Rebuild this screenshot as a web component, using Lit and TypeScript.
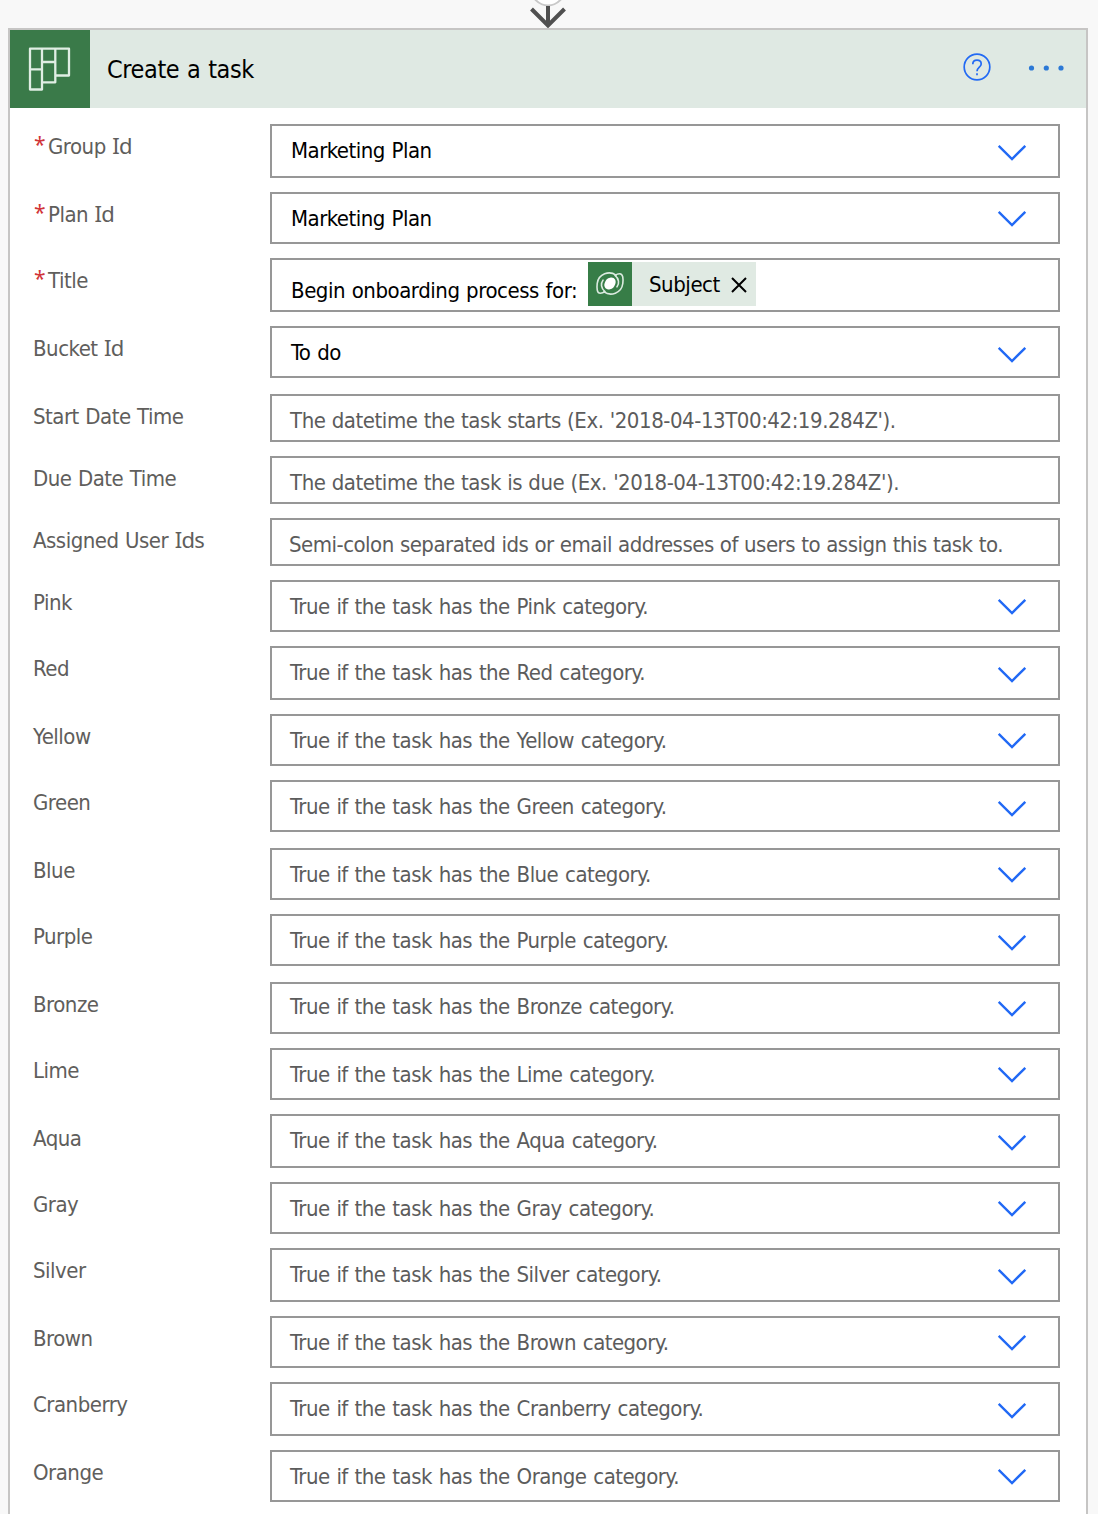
import { LitElement, html, css, svg, nothing } from "lit";
import { customElement, property } from "lit/decorators.js";
import { classMap } from "lit/directives/class-map.js";

interface Field {
  label: string;
  text: string;
  kind: "select" | "input" | "token";
  filled?: boolean;
  required?: boolean;
  /** box height */
  h: number;
  /** space above the row */
  gap?: number;
  /** chevron sits slightly lower */
  low?: boolean;
  /** text sits slightly higher */
  high?: boolean;
  /** long text, set tighter */
  tight?: boolean;
}

const category = (name: string, h: number, low: boolean, gap = 14, high = false): Field => ({
  label: name,
  text: `True if the task has the ${name} category.`,
  kind: "select",
  h,
  low,
  gap,
  high,
});

const FIELDS: Field[] = [
  { label: "Group Id", text: "Marketing Plan", kind: "select", filled: true, required: true, h: 54, gap: 16, low: true },
  { label: "Plan Id", text: "Marketing Plan", kind: "select", filled: true, required: true, h: 52 },
  { label: "Title", text: "Begin onboarding process for:", kind: "token", filled: true, required: true, h: 54 },
  { label: "Bucket Id", text: "To do", kind: "select", filled: true, h: 52, low: true },
  { label: "Start Date Time", text: "The datetime the task starts (Ex. '2018-04-13T00:42:19.284Z').", kind: "input", h: 48, gap: 16 },
  { label: "Due Date Time", text: "The datetime the task is due (Ex. '2018-04-13T00:42:19.284Z').", kind: "input", h: 48 },
  { label: "Assigned User Ids", text: "Semi-colon separated ids or email addresses of users to assign this task to.", kind: "input", h: 48, tight: true },
  category("Pink", 52, false),
  category("Red", 54, true),
  category("Yellow", 52, false),
  category("Green", 52, true),
  category("Blue", 52, false, 16),
  category("Purple", 52, true),
  category("Bronze", 52, false, 16, true),
  category("Lime", 52, false),
  category("Aqua", 54, true),
  category("Gray", 52, false),
  category("Silver", 54, true),
  category("Brown", 52, false),
  category("Cranberry", 54, true),
  category("Orange", 52, false),
];

@customElement("field-row")
export class FieldRow extends LitElement {
  @property({ attribute: false }) field!: Field;

  static styles = css`
    :host {
      display: flex;
      align-items: flex-start;
      padding: 0 26px 0 23px;
    }
    .label {
      width: 237px;
      flex: none;
      line-height: 30px;
      padding-top: 8px;
      box-sizing: border-box;
      color: #605e5c;
      white-space: nowrap;
      display: flex;
      letter-spacing: -0.5px;
    }
    .label.aqua {
      padding-top: 10px;
    }
    .star {
      color: #d13438;
      width: 15px;
      font-family: "Noto Sans", sans-serif;
      font-size: 21px;
      line-height: 24px;
      padding-left: 1px;
      box-sizing: border-box;
    }
    .seriffed {
      font-family: "Noto Sans", sans-serif;
      letter-spacing: -0.7px;
      line-height: 0;
    }
    .box {
      flex: 1;
      box-sizing: border-box;
      border: 2px solid #979797;
      background: #fff;
      display: flex;
      align-items: flex-start;
      padding-left: 18px;
      color: #5c5c5c;
    }
    .select {
      word-spacing: 1.1px;
      letter-spacing: -0.54px;
    }
    .input {
      word-spacing: 0.4px;
    }
    .tight {
      letter-spacing: -0.51px;
      padding-left: 17px;
    }
    .filled {
      color: #000;
      padding-left: 19px;
    }
    .text {
      line-height: 30px;
      padding-top: 10px;
      white-space: nowrap;
    }
    .high .text {
      padding-top: 8px;
    }
    .token .text {
      padding-top: 16px;
      width: 286px;
    }
    .chevron {
      margin: 16px 31px 0 auto;
      width: 30px;
      height: 18px;
      flex: none;
    }
    .low .chevron {
      margin-top: 18px;
    }
    .chip {
      display: flex;
      align-items: center;
      margin: 2px 0 0 11px;
      height: 44px;
      width: 168px;
      background: #e0eae3;
    }
    .chip-icon {
      width: 44px;
      height: 44px;
      background: #377d47;
      flex: none;
    }
    .chip-name {
      margin: 2px 0 0 17px;
      line-height: 30px;
      width: 72px;
    }
    .close {
      width: 16px;
      height: 16px;
      margin: 2px 0 0 10px;
    }
  `;

  private renderChip() {
    const lobe = "M28 13.200C21.500 8.500 10.500 11.500 9.200 21.500C8.700 26 8.800 31.300 12.300 31.300C14.500 31.300 15.700 30.600 17 29.700C13 26.500 12.400 21.500 15 18.200";
    return html`<span class="chip">
      <svg class="chip-icon" viewBox="0 0 44 44" fill="none" stroke="#dcebe0" stroke-width="1.6" stroke-linecap="round" stroke-linejoin="round">
        <path d=${lobe}/>
        <path d=${lobe} transform="rotate(180 22 21.500)"/>
        <path d="M22 15.800C26 14.500 28.800 18.500 27.300 22C26.300 25 24.500 27 22 27.200C18 28.500 15.200 24.500 16.700 21C17.700 18 19.500 16 22 15.800Z" fill="#fff" stroke="none"/>
      </svg>
      <span class="chip-name">Subject</span>
      <svg class="close" viewBox="0 0 16 16" fill="none" stroke="#000" stroke-width="2"><path d="M1 1L15 15M15 1L1 15"/></svg>
    </span>`;
  }

  private renderLabel(label: string) {
    const at = label.search(/\bIds?$/);
    return at < 0
      ? html`<span>${label}</span>`
      : html`<span>${label.slice(0, at)}<span class="seriffed">${label.slice(at)}</span></span>`;
  }

  render() {
    const f = this.field;
    return html`
      <div class=${classMap({ label: true, aqua: f.label === "Aqua" })}>
        ${f.required ? html`<span class="star">*</span>` : nothing}${this.renderLabel(f.label)}
      </div>
      <div
        class=${classMap({ box: true, [f.kind]: true, filled: !!f.filled, low: !!f.low, high: !!f.high, tight: !!f.tight })}
        style="height:${f.h}px"
      >
        <span class="text">${f.text}</span>
        ${f.kind === "token" ? this.renderChip() : nothing}
        ${f.kind === "select"
          ? html`<svg class="chevron" viewBox="0 0 30 18" fill="none" stroke="#2169f5" stroke-width="2.400"><path d="M1.700 1.800L15 15L28.300 1.800"/></svg>`
          : nothing}
      </div>
    `;
  }
}

@customElement("app-root")
export class AppRoot extends LitElement {
  static styles = css`
    :host {
      display: block;
      height: 1514px;
      overflow: hidden;
      background: #f8f8f8;
      font-family: "DejaVu Sans Condensed", "DejaVu Sans", sans-serif;
      font-stretch: 75%;
      font-size: 22px;
      letter-spacing: -0.45px;
      word-spacing: 0.7px;
    }
    .connector {
      display: block;
      width: 40px;
      height: 28px;
      margin-left: 528px;
    }
    .card {
      margin: 0 10px 0 8px;
      border: 2px solid #c6c5c4;
      border-bottom: none;
      background: #fff;
      height: 1486px;
      box-sizing: border-box;
    }
    .header {
      display: flex;
      align-items: center;
      height: 78px;
      background: #dfe9e3;
    }
    .logo {
      width: 80px;
      height: 78px;
      background: #3a7a49;
      flex: none;
    }
    .title {
      margin: 2px auto 0 17px;
      font-size: 25px;
      line-height: 34px;
      letter-spacing: -0.4px;
      word-spacing: 1px;
      color: #000;
    }
    .help {
      width: 28px;
      height: 28px;
      margin: 0 37px 4px 0;
    }
    .more {
      width: 36px;
      height: 8px;
      margin: 0 22px 2px 0;
    }
  `;

  render() {
    return html`
      <svg class="connector" viewBox="0 0 40 28" fill="none">
        <circle cx="20" cy="-11" r="16.500" fill="#fff" stroke="#c8c8c8" stroke-width="2"/>
        <path d="M20 6V25M3.500 9L20 25.500L36.500 9" stroke="#505050" stroke-width="4"/>
      </svg>
      <section class="card">
        <header class="header">
          <svg class="logo" viewBox="0 0 80 78" fill="none" stroke="#e0eee4" stroke-width="2.300" stroke-linejoin="round">
            <path d="M20 18.700H59V45.500H45.300V52.300H32V59.500H20ZM32 18.700V52.500M45.300 18.700V45.500M20 39.300H32M32 32H45.300"/>
          </svg>
          <span class="title">Create a task</span>
          <svg class="help" viewBox="0 0 28 28" fill="none" stroke="#226af4" stroke-width="1.700">
            <circle cx="14" cy="14" r="12.800"/>
            <path d="M9.800 11.200C9.800 8.600 11.600 7.200 14 7.200C16.500 7.200 18.200 8.700 18.200 10.900C18.200 14 14 14.200 14 18.300M14 20.200V22.200"/>
          </svg>
          <svg class="more" viewBox="0 0 36 8" fill="#2c79d6">${[3.5, 18.3, 33].map((x) => svg`<circle cx=${x} cy="4" r="2.600"/>`)}</svg>
        </header>
        ${FIELDS.map((f) => html`<field-row .field=${f} style="margin-top:${f.gap ?? 14}px"></field-row>`)}
      </section>
    `;
  }
}
